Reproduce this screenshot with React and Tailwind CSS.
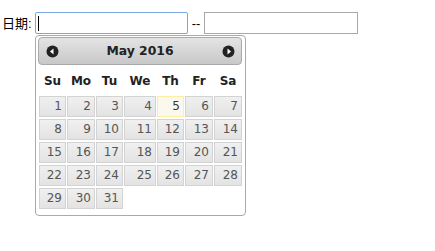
import React from "react";

const cols = ["Su", "Mo", "Tu", "We", "Th", "Fr", "Sa"];
const days = Array.from({ length: 31 }, (_, i) => i + 1);

function CircleArrow({ dir }) {
  return (
    <svg width="13" height="13" viewBox="0 0 13 13">
      <circle cx="6.5" cy="6.5" r="6" fill="#222222" />
      {dir === "left" ? (
        <polygon points="4,6.5 7.5,3.5 7.5,9.5" fill="#ffffff" />
      ) : (
        <polygon points="9,6.5 5.5,3.5 5.5,9.5" fill="#ffffff" />
      )}
    </svg>
  );
}

export default function App() {
  return (
    <div className="relative w-[435px] h-[251px] bg-white overflow-hidden" style={{ fontFamily: '"DejaVu Sans", Verdana, sans-serif' }}>
      <div className="flex items-center h-[22px] mt-[12px]">
        <span
          className="w-[35px] pl-[2px] text-[13px] leading-none text-black"
          style={{ fontFamily: '"Liberation Sans", "Noto Sans CJK SC", sans-serif' }}
        >
          日期:
        </span>
        <div className="relative w-[153px] h-[22px] border border-[#7da5e2] rounded-[2px] bg-white">
          <span className="absolute left-[2px] top-[3px] w-px h-[15px] bg-black" />
        </div>
        <span
          className="w-[16px] text-center text-[13px] leading-none text-black"
          style={{ fontFamily: '"Liberation Sans", sans-serif' }}
        >
          --
        </span>
        <div className="w-[154px] h-[22px] border border-[#a9a9a9] bg-white" />
      </div>

      <div className="absolute left-[35px] top-[35px] w-[211px] h-[181px] border border-[#aaaaaa] rounded-[4px] bg-white pt-[1px] pl-[2px] pr-[3px]">
        <div className="relative h-[28px] border border-[#aaaaaa] rounded-[4px] bg-gradient-to-b from-[#e4e4e4] to-[#c8c8c8] flex items-center justify-center">
          <span className="absolute left-[7px] top-[7px] flex">
            <CircleArrow dir="left" />
          </span>
          <span className="text-[12.4px] font-bold text-[#222222] leading-none">May 2016</span>
          <span className="absolute right-[6px] top-[7px] flex">
            <CircleArrow dir="right" />
          </span>
        </div>
        <div className="grid grid-cols-[27px_28px_27px_32px_27px_28px_28px] gap-x-[1px] pl-[1px]">
          {cols.map((c) => (
            <div key={c} className="h-[31px] flex items-center justify-center text-[12px] font-bold text-[#222222] leading-none">
              {c}
            </div>
          ))}
        </div>
        <div className="grid grid-cols-[27px_28px_27px_32px_27px_28px_28px] gap-x-[1px] gap-y-[2px] pl-[1px]">
          {days.map((d) => {
            const today = d === 5;
            return (
              <div
                key={d}
                className={
                  today
                    ? "h-[21px] border border-[#fcefa1] bg-[#fbf9ee] text-[#363636] text-right pr-[3px] text-[12px] leading-[19px]"
                    : "h-[21px] border border-[#d3d3d3] bg-gradient-to-b from-[#f0f0f0] to-[#e3e3e3] text-[#555555] text-right pr-[3px] text-[12px] leading-[19px]"
                }
              >
                {d}
              </div>
            );
          })}
        </div>
      </div>
    </div>
  );
}
